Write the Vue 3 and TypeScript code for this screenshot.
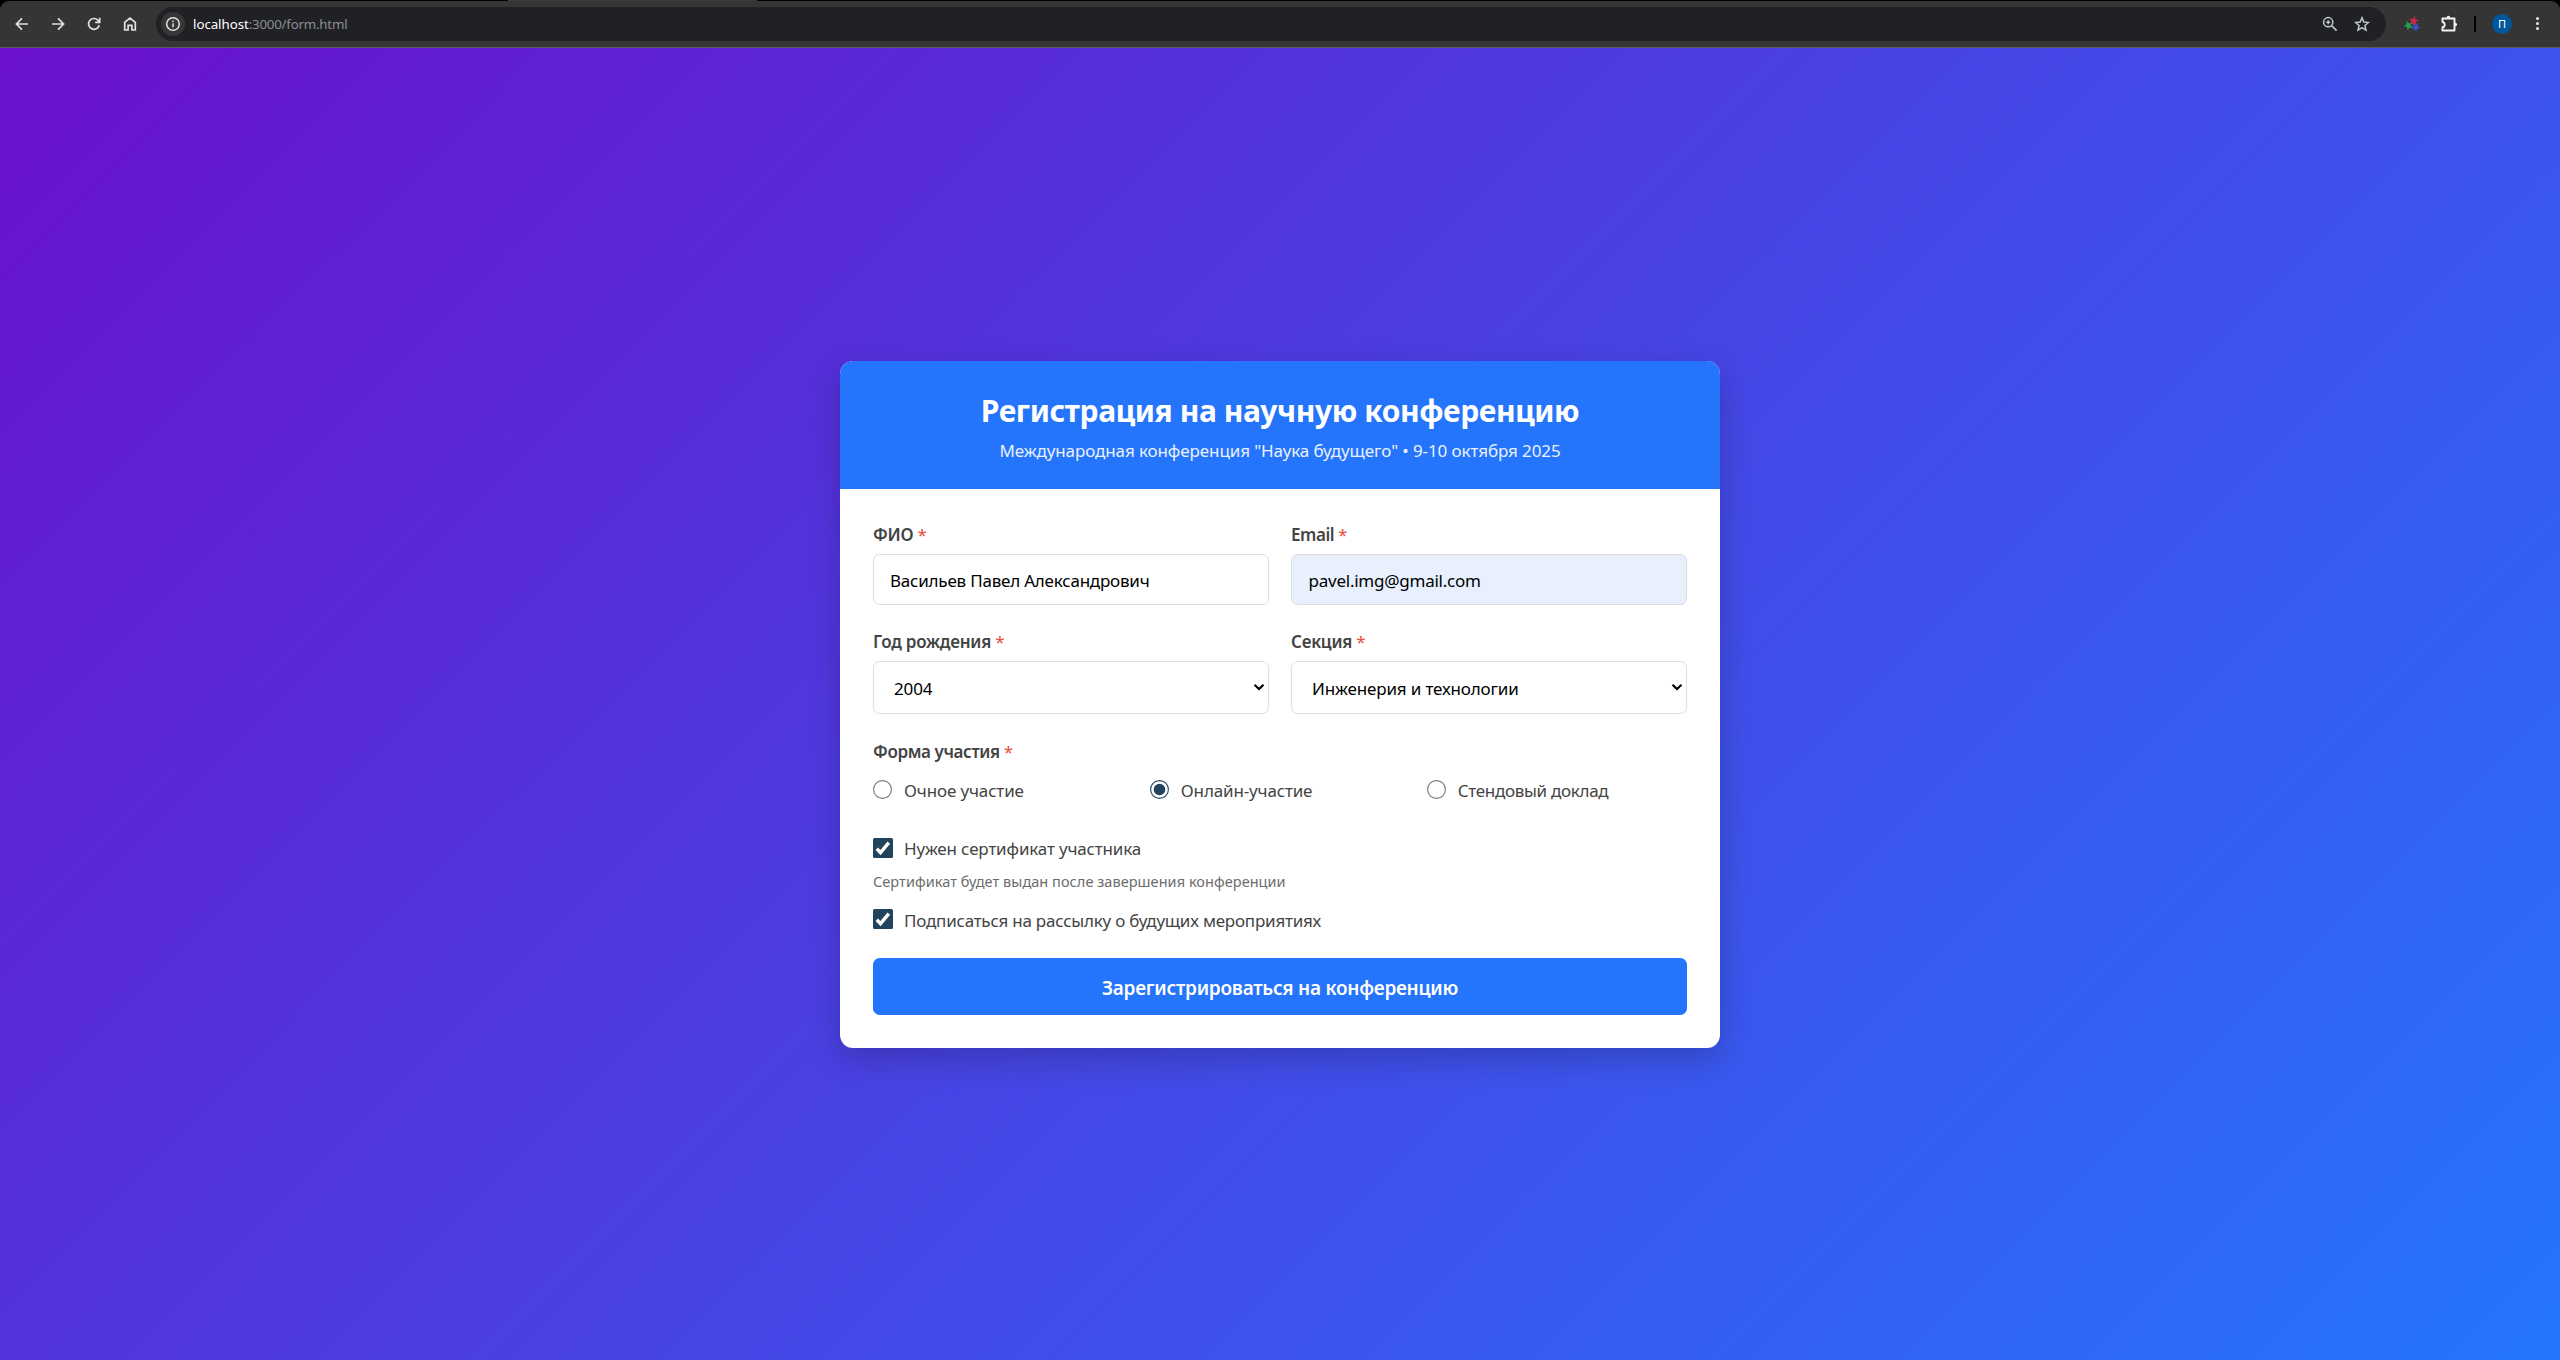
<script setup lang="ts">
import { ref } from 'vue'

interface Choice {
  id: string
  text: string
  spacing: string
}

const fullName = ref('Васильев Павел Александрович')
const email = ref('pavel.img@gmail.com')
const year = ref('2004')
const section = ref('Инженерия и технологии')
const format = ref('online')

const formats: Choice[] = [
  { id: 'onsite', text: 'Очное участие', spacing: '-0.14px' },
  { id: 'online', text: 'Онлайн-участие', spacing: '-0.15px' },
  { id: 'poster', text: 'Стендовый доклад', spacing: '-0.3px' },
]
const star = 'M0-5 1.4-1.9 4.8-1.5 2.2.7 2.9 4 0 2.4-2.9 4-2.2.7-4.8-1.5-1.4-1.9Z'
</script>

<template>
  <div class="window">
    <header class="toolbar">
      <div class="tab-edge"></div>
      <svg class="nav" viewBox="0 0 16 16"><path d="M14 8H2.8M8 2.4 2.4 8 8 13.6" /></svg>
      <svg class="nav" viewBox="0 0 16 16"><path d="M2 8h11.2M8 2.4 13.6 8 8 13.6" /></svg>
      <svg class="nav" viewBox="0 0 16 16"><path d="M13.2 9.2A5.4 5.4 0 1 1 11.8 4.1L13.6 6M13.7 1.8V6.3H9.2" /></svg>
      <svg class="nav" viewBox="0 0 16 16"><path d="M2.7 14V6.4L8 2.2l5.3 4.2V14H9.9V9.4H6.1V14Z" /></svg>
      <div class="omnibox">
        <span class="site-info">
          <svg viewBox="0 0 16 16"><circle cx="8" cy="8" r="6.3" /><path d="M8 7.2v4M8 4.5v1.6" /></svg>
        </span>
        <span class="host">localhost</span><span class="path">:3000/form.html</span>
        <svg class="zoom" viewBox="0 0 16 16"><circle cx="6.2" cy="6.2" r="4.6" /><path d="m9.6 9.6 5 5M6.2 4.2v4M4.2 6.2h4" /></svg>
        <svg class="star" viewBox="0 0 16 16"><path d="m8 1.8 1.8 4.3 4.6.4-3.5 3 1.1 4.6L8 11.7l-4 2.4 1.1-4.6-3.5-3 4.6-.4Z" /></svg>
      </div>
      <svg class="ext" viewBox="0 0 16 16">
        <path fill="#1e9e50" :d="star" transform="translate(4.5 9.5) rotate(-25)" />
        <path fill="#3a50c0" :d="star" transform="translate(11.8 11) rotate(30)" />
        <path fill="#c32a45" :d="star" transform="translate(9.8 5) rotate(8)" />
      </svg>
      <svg class="puzzle" viewBox="0 0 18 18"><path d="M2.5 3.5H14.5V15.5H2.5V12.3A2.7 2.7 0 0 0 2.5 7Z" /><path class="solid" d="M6.7 3a1.8 2.2 0 0 1 3.6 0ZM15 7.7a2.2 1.8 0 0 1 0 3.6Z" /></svg>
      <div class="divider"></div>
      <div class="avatar">П</div>
      <div class="menu"><i></i><i></i><i></i></div>
    </header>

    <main class="page">
      <form class="card" @submit.prevent>
        <div class="card-head">
          <h1>Регистрация на научную конференцию</h1>
          <p>Международная конференция "Наука будущего" • 9-10 октября 2025</p>
        </div>
        <div class="card-body">
          <div class="row">
            <div class="field">
              <label>ФИО <b>*</b></label>
              <input v-model="fullName" type="text" class="name" />
            </div>
            <div class="field">
              <label class="tight">Email <b>*</b></label>
              <input v-model="email" type="email" class="filled" />
            </div>
          </div>
          <div class="row">
            <div class="field">
              <label>Год рождения <b>*</b></label>
              <div class="select">
                <select v-model="year"><option>2004</option></select>
                <svg viewBox="0 0 12 8"><path d="m1.5 1.8 4.5 4.2 4.5-4.2" /></svg>
              </div>
            </div>
            <div class="field">
              <label>Секция <b>*</b></label>
              <div class="select">
                <select v-model="section"><option>Инженерия и технологии</option></select>
                <svg viewBox="0 0 12 8"><path d="m1.5 1.8 4.5 4.2 4.5-4.2" /></svg>
              </div>
            </div>
          </div>
          <label class="group-label">Форма участия <b>*</b></label>
          <div class="radios">
            <label v-for="f in formats" :key="f.id" class="option" @click="format = f.id">
              <svg class="radio" :class="{ on: format === f.id }" viewBox="0 0 19 19">
                <circle class="ring" cx="9.5" cy="9.5" r="8.9" />
                <circle v-if="format === f.id" class="dot" cx="9.5" cy="9.5" r="5.8" />
              </svg>
              <span :style="{ letterSpacing: f.spacing }">{{ f.text }}</span>
            </label>
          </div>
          <label class="option certificate">
            <svg class="check" viewBox="0 0 20 20"><rect width="20" height="20" rx="1.5" /><path d="m3.8 10.8 3.7 3.8 8.3-10" /></svg>
            <span>Нужен сертификат участника</span>
          </label>
          <p class="hint">Сертификат будет выдан после завершения конференции</p>
          <label class="option newsletter">
            <svg class="check" viewBox="0 0 20 20"><rect width="20" height="20" rx="1.5" /><path d="m3.8 10.8 3.7 3.8 8.3-10" /></svg>
            <span>Подписаться на рассылку о будущих мероприятиях</span>
          </label>
          <button type="submit">Зарегистрироваться на конференцию</button>
        </div>
      </form>
    </main>
  </div>
</template>

<style>
body {
  background: #000;
}
</style>

<style scoped>
* {
  box-sizing: border-box;
}
.window {
  display: flex;
  flex-direction: column;
  width: 2560px;
  height: 1360px;
  overflow: hidden;
  font-family: 'Noto Sans', 'Open Sans', sans-serif;
  font-size: 17px;
  background: #000;
}
.toolbar {
  position: relative;
  display: flex;
  align-items: center;
  flex: none;
  height: 47px;
  margin-top: 1px;
  padding: 0 16px 1px 14px;
  background: #353535;
  border-bottom: 1px solid #5b5b5b;
  border-radius: 9px 9px 0 0;
}
.tab-edge {
  position: absolute;
  left: 508px;
  top: -1px;
  width: 249px;
  height: 1px;
  background: #3a3a3a;
}
.nav {
  flex: none;
  width: 16px;
  height: 16px;
  margin-right: 20px;
  fill: none;
  stroke: #dfe1e3;
  stroke-width: 1.7;
}
.omnibox {
  display: flex;
  align-items: center;
  width: 2230px;
  height: 34px;
  margin-left: -2px;
  padding: 0 16px 0 5px;
  border-radius: 17px;
  background: #202124;
  font-size: 13.3px;
}
.site-info {
  display: flex;
  align-items: center;
  justify-content: center;
  width: 24px;
  height: 24px;
  margin-right: 8px;
  border-radius: 50%;
  background: #373737;
}
.site-info svg {
  width: 16px;
  height: 16px;
  fill: none;
  stroke: #e3e3e3;
  stroke-width: 1.5;
}
.host {
  color: #fff;
  letter-spacing: -0.05px;
}
.path {
  color: #8c8f93;
  letter-spacing: -0.22px;
}
.zoom,
.star {
  width: 16px;
  height: 16px;
  fill: none;
  stroke: #c4c7ca;
  stroke-width: 1.5;
}
.zoom {
  margin-left: auto;
  margin-right: 16px;
}
.ext {
  width: 16px;
  height: 16px;
  margin-left: 18px;
  overflow: visible;
}
.puzzle {
  width: 18px;
  height: 18px;
  margin-left: 20px;
  fill: none;
  stroke: #f1f1f1;
  stroke-width: 1.9;
  stroke-linejoin: round;
}
.puzzle .solid {
  fill: #f1f1f1;
  stroke: none;
}
.divider {
  width: 2px;
  height: 16px;
  margin-left: 16px;
  background: #000;
}
.avatar {
  width: 20px;
  height: 20px;
  margin-left: 16px;
  border-radius: 50%;
  background: #00579b;
  color: #fff;
  font-size: 11px;
  line-height: 20px;
  text-align: center;
}
.menu {
  display: flex;
  flex-direction: column;
  gap: 2px;
  margin-left: 24px;
}
.menu i {
  width: 3px;
  height: 3px;
  border-radius: 50%;
  background: #e8e8e8;
}
.page {
  flex: 1;
  display: flex;
  align-items: center;
  justify-content: center;
  background: linear-gradient(135deg, #6a11cb 0%, #2575fc 100%);
}
.card {
  width: 880px;
  height: 687px;
  margin-top: 1px;
  overflow: hidden;
  background: #fff;
  border-radius: 13.2px;
  box-shadow: 0 11px 33px rgba(0, 0, 0, 0.2);
}
.card-head {
  height: 128px;
  padding-top: 30px;
  background: #2575fc;
  color: #fff;
  text-align: center;
}
h1 {
  margin: 0 0 7px;
  font-size: 30px;
  font-weight: 700;
  line-height: 40px;
  letter-spacing: -0.41px;
}
.card-head p {
  margin: 0;
  line-height: 26px;
  letter-spacing: -0.1px;
  opacity: 0.9;
}
.card-body {
  display: flex;
  flex-direction: column;
  padding: 34px 33px 33px;
}
.row {
  display: flex;
  gap: 22px;
  margin-bottom: 25px;
}
.field {
  display: flex;
  flex-direction: column;
  flex: 1;
  gap: 7px;
}
label {
  line-height: 24px;
  letter-spacing: -0.25px;
  color: #444;
  font-weight: 600;
}
label.tight {
  letter-spacing: -0.45px;
}
label b {
  color: #e74c3c;
  font-weight: 400;
}
input,
select {
  width: 100%;
  border: 1px solid #ddd;
  border-radius: 6.6px;
  background: #fff;
  color: #000;
  font-family: inherit;
  font-size: 17px;
  outline: none;
}
input {
  height: 51px;
  padding: 1px 16px 0;
}
.name {
  letter-spacing: -0.21px;
}
.filled {
  padding-left: 16.5px;
  background: #e8f0fe;
  letter-spacing: -0.24px;
}
.select {
  position: relative;
}
select {
  display: block;
  height: 53px;
  padding: 1px 20px 0;
  appearance: none;
  letter-spacing: -0.14px;
}
.select svg {
  position: absolute;
  right: 4px;
  top: 22px;
  width: 12px;
  height: 8px;
  fill: none;
  stroke: #000;
  stroke-width: 2.2;
}
.group-label {
  margin-top: 1px;
  margin-bottom: 15px;
  letter-spacing: -0.39px;
}
.radios {
  display: grid;
  grid-template-columns: repeat(3, 1fr);
  column-gap: 16.5px;
}
.option {
  display: flex;
  align-items: flex-start;
  gap: 11px;
  font-weight: 400;
}
.radio {
  flex: none;
  width: 19px;
  height: 19px;
  margin: 1px 1px 0 0;
}
.ring {
  fill: #fff;
  stroke: #767676;
  stroke-width: 1.1;
}
.on .ring {
  stroke: #21435b;
}
.dot {
  fill: #21435b;
}
.check {
  flex: none;
  width: 20px;
  height: 20px;
}
.check rect {
  fill: #21435b;
}
.check path {
  fill: none;
  stroke: #fff;
  stroke-width: 3.4;
}
.certificate {
  margin-top: 34px;
  letter-spacing: -0.16px;
}
.certificate .check {
  margin-top: 1px;
}
.hint {
  margin: 10px 0 18px;
  color: #6c6c6c;
  font-size: 14.5px;
  line-height: 20px;
  letter-spacing: 0.05px;
}
.newsletter {
  letter-spacing: -0.22px;
}
button {
  height: 57px;
  margin-top: 25px;
  padding: 2px 0 0;
  border: 0;
  border-radius: 6.6px;
  background: #2575fc;
  color: #fff;
  font-family: inherit;
  font-size: 19px;
  font-weight: 600;
  letter-spacing: -0.25px;
}
</style>
